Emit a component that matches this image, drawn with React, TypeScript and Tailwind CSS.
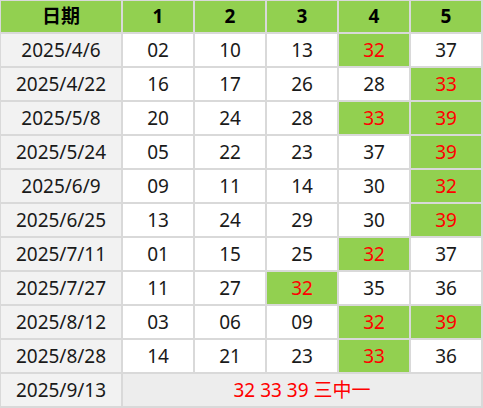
import React from 'react';

type Row = { date: string; nums: string[]; hits: number[] };

const rows: Row[] = [
  { date: '2025/4/6', nums: ['02', '10', '13', '32', '37'], hits: [3] },
  { date: '2025/4/22', nums: ['16', '17', '26', '28', '33'], hits: [4] },
  { date: '2025/5/8', nums: ['20', '24', '28', '33', '39'], hits: [3, 4] },
  { date: '2025/5/24', nums: ['05', '22', '23', '37', '39'], hits: [4] },
  { date: '2025/6/9', nums: ['09', '11', '14', '30', '32'], hits: [4] },
  { date: '2025/6/25', nums: ['13', '24', '29', '30', '39'], hits: [4] },
  { date: '2025/7/11', nums: ['01', '15', '25', '32', '37'], hits: [3] },
  { date: '2025/7/27', nums: ['11', '27', '32', '35', '36'], hits: [2] },
  { date: '2025/8/12', nums: ['03', '06', '09', '32', '39'], hits: [3, 4] },
  { date: '2025/8/28', nums: ['14', '21', '23', '33', '36'], hits: [3] },
];

const font = {
  fontFamily: '"Noto Sans", "Noto Sans CJK SC", sans-serif',
};

export default function App() {
  return (
    <div
      style={font}
      className="grid w-[483px] grid-cols-[120px_repeat(5,70px)] grid-rows-[31px_repeat(11,32px)] gap-[2px] bg-[#d9d9d9] pt-[1px] pb-[2px] pl-[1px] pr-[2px] text-[19px] text-[#1a1a1a]"
    >
      {['日期', '1', '2', '3', '4', '5'].map((h) => (
        <div
          key={h}
          className="flex items-center justify-center bg-[#92d050] font-bold text-black"
        >
          {h}
        </div>
      ))}

      {rows.map((r) => (
        <React.Fragment key={r.date}>
          <div className="flex items-center justify-center bg-[#f2f2f2]">
            {r.date}
          </div>
          {r.nums.map((n, i) =>
            r.hits.includes(i) ? (
              <div
                key={i}
                className="flex items-center justify-center bg-[#92d050] text-[#ff0000]"
              >
                {n}
              </div>
            ) : (
              <div key={i} className="flex items-center justify-center bg-white">
                {n}
              </div>
            )
          )}
        </React.Fragment>
      ))}

      <div className="flex items-center justify-center bg-[#f2f2f2]">2025/9/13</div>
      <div className="col-span-5 flex items-center justify-center bg-[#ededed] text-[#ff0000]">
        32 33 39 三中一
      </div>
    </div>
  );
}
